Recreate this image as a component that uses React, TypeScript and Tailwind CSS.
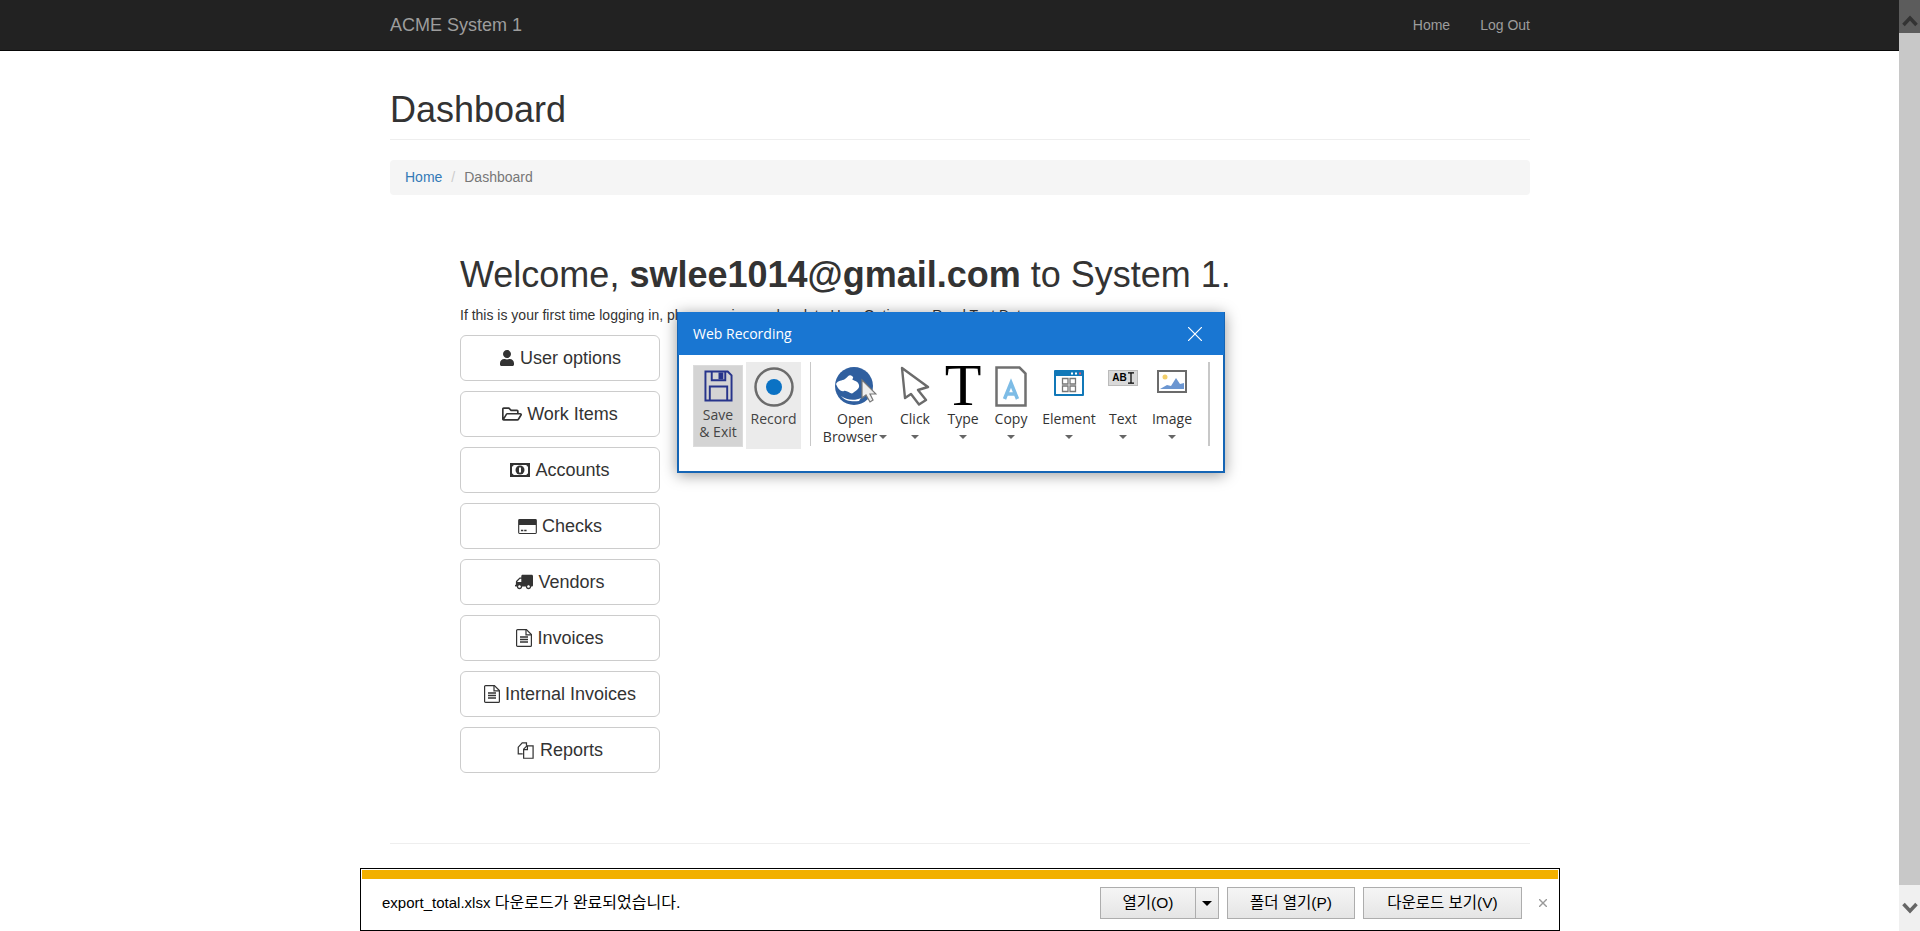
import { ReactNode } from 'react'
import { FaUser, FaRegFolderOpen, FaTruck } from 'react-icons/fa'

function MoneyIcon() {
  return (
    <svg viewBox="0 0 20 14" className="w-[20px] h-[14px]">
      <path d="M0 0h20v14H0z" fill="#333" />
      <path d="M2 3.500Q3.500 3.500 3.500 2h13q0 1.500 1.500 1.500v7q-1.500 0-1.500 1.500h-13Q3.500 10.500 2 10.500z" fill="#fff" />
      <circle cx="10" cy="7" r="4.500" fill="#333" />
      <path d="M9 4.500h2v5H9z" fill="#fff" />
    </svg>
  )
}

function CardIcon() {
  return (
    <svg viewBox="0 0 20 16" className="w-[19px] h-[15px]" fill="#333">
      <path d="M1.500 0h17A1.500 1.500 0 0 1 20 1.500v13a1.500 1.500 0 0 1-1.500 1.500h-17A1.500 1.500 0 0 1 0 14.500v-13A1.500 1.500 0 0 1 1.500 0zM1.200 6.500v8.300h17.600V6.500zM3 11.500h2.500V13H3zM6.500 11.500H9V13H6.500z" fillRule="evenodd" />
    </svg>
  )
}

function FileIcon() {
  return (
    <svg viewBox="0 0 16 18" className="w-[16px] h-[18px]" fill="none" stroke="#333" strokeWidth="1.200">
      <path d="M1.600.6h8.800l5 5v10.800a1 1 0 0 1-1 1H1.600a1 1 0 0 1-1-1V1.600a1 1 0 0 1 1-1z" />
      <path d="M10 .8v5h5" />
      <path d="M4 8h8M4 10.500h8M4 13h8" strokeWidth="1.400" />
    </svg>
  )
}

function DuplicateIcon() {
  return (
    <svg viewBox="0 0 18 18" className="w-[18px] h-[17px]" fill="none" stroke="#333" strokeWidth="1.300">
      <path d="M5.500 12.500H.8V5.500L5 1h4.500v3" />
      <path d="M6.500 7.500 10 4h6.500v13.200H6.500z" fill="#fff" />
      <path d="M6.500 8H10.500V4" />
    </svg>
  )
}

const menuItems: { label: string; icon: ReactNode }[] = [
  { label: 'User options', icon: <FaUser className="w-[16px] h-[16px]" /> },
  { label: 'Work Items', icon: <FaRegFolderOpen className="w-[20px] h-[18px]" /> },
  { label: 'Accounts', icon: <MoneyIcon /> },
  { label: 'Checks', icon: <CardIcon /> },
  { label: 'Vendors', icon: <FaTruck className="w-[18px] h-[16px] -scale-x-100" /> },
  { label: 'Invoices', icon: <FileIcon /> },
  { label: 'Internal Invoices', icon: <FileIcon /> },
  { label: 'Reports', icon: <DuplicateIcon /> },
]

function Caret() {
  return <span className="block w-0 h-0 border-x-[4px] border-x-transparent border-t-[4px] border-t-[#666]" />
}

function ToolItem({ icon, label, width, second }: { icon: ReactNode; label: string; width: string; second?: string }) {
  return (
    <div className={`flex flex-col items-center ${width}`}>
      <div className="h-[47px] flex items-start justify-center">{icon}</div>
      <span className="text-[14px] leading-[18px] text-[#333] mt-[1px]">{label}</span>
      {second ? (
        <span className="flex items-center gap-[2px] text-[14px] leading-[18px] text-[#333]">
          {second}
          <Caret />
        </span>
      ) : (
        <span className="h-[18px] flex items-center"><Caret /></span>
      )}
    </div>
  )
}

function RecorderWindow() {
  return (
    <div className="absolute left-[677px] top-[312px] w-[548px] h-[161px] bg-white border-x-2 border-b-2 border-[#1565b5] shadow-[0_2px_14px_rgba(0,0,0,0.4)] font-['Open_Sans',sans-serif]">
      <div className="h-[43px] -mx-[1px] bg-[#1976d2] flex items-center justify-between pl-[15px] pr-[22px] text-white text-[14px]">
        <span>Web Recording</span>
        <svg viewBox="0 0 14 14" className="w-[14px] h-[14px]" stroke="#fff" strokeWidth="1.200"><path d="M0 0l14 14M14 0L0 14" /></svg>
      </div>
      <div className="flex items-start pl-[14px] pt-[7px]">
        <div className="w-[50px] h-[82px] mt-[3px] bg-[#d4d4d4] border border-[#dcdcdc] flex flex-col items-center text-[14px] leading-[17px] text-[#444]">
          <svg viewBox="0 0 30 33" className="w-[29px] h-[32px] mt-[4px] mb-[4px]" fill="none" stroke="#27348b" strokeWidth="2">
            <path d="M1.500 1.500h23l4 4v26h-27z" />
            <path d="M8 1.500v9h14v-9" />
            <path d="M16 3.500h3v5h-3z" fill="#27348b" />
            <path d="M6 31V17h18v14" />
          </svg>
          <span>Save</span>
          <span>&amp; Exit</span>
        </div>
        <div className="w-[55px] h-[87px] ml-[3px] bg-[#ebebeb] flex flex-col items-center text-[14px] text-[#444]">
          <svg viewBox="0 0 40 40" className="w-[40px] h-[40px] mt-[5px] mb-[3px]">
            <circle cx="20" cy="20" r="18.500" fill="none" stroke="#6b6b6b" strokeWidth="2.500" />
            <circle cx="20" cy="20" r="8" fill="#0b72c4" />
          </svg>
          <span className="leading-[18px]">Record</span>
        </div>
        <span className="block w-[1px] h-[84px] bg-[#c8c8c8] ml-[9px]" />
        <div className="flex ml-[6px]">
          <ToolItem
            width="w-[76px]"
            label="Open"
            second="Browser"
            icon={
              <svg viewBox="0 0 44 40" className="w-[44px] h-[40px] mt-[5px]">
                <circle cx="21" cy="19" r="19" fill="#2f5f9f" />
                <path d="M3 17C5 13 9 14 12 12S16 7 19 9 18 12 20 13 25 14 26 18 22 24 20 26 14 23 11 24 5 22 3 17z" fill="#fff" />
                <path d="M8 29c5 4 14 5 20 2l-2 3c-7 1-14 0-18-5z" fill="#fff" />
                <path d="M29 13v18l4-3 4 7 3-2-3-6h6z" fill="#eee" stroke="#777" strokeWidth="1.200" />
              </svg>
            }
          />
          <ToolItem
            width="w-[44px]"
            label="Click"
            icon={
              <svg viewBox="0 0 30 40" className="w-[30px] h-[40px] mt-[4px]" fill="#fff" stroke="#6b6b6b" strokeWidth="2.400">
                <path d="M2 2 28 21 18 24 26 34 19 38.500 11 28 5 32z" strokeLinejoin="round" />
              </svg>
            }
          />
          <ToolItem
            width="w-[52px]"
            label="Type"
            icon={<span className="block font-['Liberation_Serif',serif] text-[60px] leading-[47px] text-black">T</span>}
          />
          <ToolItem
            width="w-[44px]"
            label="Copy"
            icon={
              <svg viewBox="0 0 32 41" className="w-[32px] h-[41px] mt-[4px]">
                <path d="M1.500 1.500h23l6 6v32h-29z" fill="#fff" stroke="#707070" strokeWidth="2.500" />
                <path d="M9.500 33l6.500-16 6.500 16M11.500 28h9" fill="none" stroke="#7dbce6" strokeWidth="3.500" />
              </svg>
            }
          />
          <ToolItem
            width="w-[72px]"
            label="Element"
            icon={
              <svg viewBox="0 0 30 26" className="w-[30px] h-[26px] mt-[8px]">
                <rect width="30" height="26" rx="1" fill="#1178b8" />
                <rect x="2" y="6" width="26" height="18" fill="#fff" />
                <rect x="17" y="2.500" width="2" height="2" fill="#fff" />
                <rect x="21" y="2.500" width="2" height="2" fill="#fff" />
                <rect x="25" y="2.500" width="2" height="2" fill="#e9546b" />
                <path d="M8.500 8.500h5.500v5.500H8.500zM16 8.500h5.500v5.500H16zM8.500 16h5.500v5.500H8.500zM16 16h5.500v5.500H16z" fill="#fff" stroke="#777" strokeWidth="1.300" />
              </svg>
            }
          />
          <ToolItem
            width="w-[36px]"
            label="Text"
            icon={
              <span className="mt-[8px] w-[30px] h-[16px] bg-[#d9d9d9] border border-[#bbb] flex items-center justify-center gap-[1px] font-['Liberation_Sans',sans-serif] font-bold text-[10px] leading-none text-black">
                AB
                <svg viewBox="0 0 6 12" className="w-[6px] h-[12px]" fill="none" stroke="#000" strokeWidth="1.200">
                  <path d="M0 .8h6M0 11.200h6M3 .8v10.400" />
                </svg>
              </span>
            }
          />
          <ToolItem
            width="w-[62px]"
            label="Image"
            icon={
              <svg viewBox="0 0 30 23" className="w-[30px] h-[23px] mt-[8px]">
                <rect x="1" y="1" width="28" height="21" fill="#fff" stroke="#6b6b6b" strokeWidth="2" />
                <circle cx="8" cy="7" r="2.500" fill="#f2cf6b" />
                <path d="M3 19l7-4 4 1 5-8 4 6 4-1v6z" fill="#6b96d1" />
              </svg>
            }
          />
        </div>
        <span className="block w-[2px] h-[84px] bg-[#c8c8c8] ml-[5px]" />
      </div>
    </div>
  )
}

function DownloadBar() {
  return (
    <div className="absolute left-[360px] top-[868px] w-[1200px] h-[63px] bg-white border border-black font-['Liberation_Sans','Noto_Sans_CJK_KR',sans-serif]">
      <div className="h-[9px] mx-[1px] mt-[1px] bg-[#f2b000]" />
      <div className="flex items-center justify-between h-[48px] pl-[21px] pr-[12px] text-[15.500px] text-black">
        <span className="text-[16px]">
          <span className="text-[15px]">export_total.xlsx</span> 다운로드가 완료되었습니다.
        </span>
        <div className="flex items-center">
          <div className="flex h-[32px] border border-[#adadad] bg-gradient-to-b from-[#f5f5f5] to-[#e5e5e5]">
            <span className="w-[95px] flex items-center justify-center border-r border-[#adadad]">열기(O)</span>
            <span className="w-[22px] flex items-center justify-center">
              <span className="block w-0 h-0 border-x-[5px] border-x-transparent border-t-[5px] border-t-black" />
            </span>
          </div>
          <span className="ml-[8px] w-[128px] h-[32px] flex items-center justify-center border border-[#adadad] bg-gradient-to-b from-[#f5f5f5] to-[#e5e5e5]">폴더 열기(P)</span>
          <span className="ml-[8px] w-[159px] h-[32px] flex items-center justify-center border border-[#adadad] bg-gradient-to-b from-[#f5f5f5] to-[#e5e5e5]">다운로드 보기(V)</span>
          <svg viewBox="0 0 8 8" className="ml-[17px] w-[8px] h-[8px]" stroke="#999" strokeWidth="1.400"><path d="M0 0l8 8M8 0L0 8" /></svg>
        </div>
      </div>
    </div>
  )
}

export default function App() {
  return (
    <div className="relative flex h-[931px] overflow-hidden bg-white font-['Liberation_Sans',sans-serif] text-[#333]">
      <div className="flex-1 min-w-0">
        <nav className="h-[51px] bg-[#222] border-b border-[#080808]">
          <div className="w-[1140px] ml-[390px] h-[50px] flex items-center justify-between text-[#9d9d9d]">
            <span className="text-[18px]">ACME System 1</span>
            <div className="flex gap-[30px] text-[14px]">
              <span>Home</span>
              <span>Log Out</span>
            </div>
          </div>
        </nav>
        <div className="w-[1140px] ml-[390px]">
          <div className="mt-[39px] pb-[9px] border-b border-[#eee]">
            <h1 className="text-[36px] leading-[40px]">Dashboard</h1>
          </div>
          <div className="mt-[20px] h-[35px] px-[15px] flex items-center bg-[#f5f5f5] rounded text-[14px]">
            <span className="text-[#337ab7]">Home</span>
            <span className="text-[#ccc] px-[9px]">/</span>
            <span className="text-[#777]">Dashboard</span>
          </div>
          <div className="ml-[70px] mt-[60px]">
            <h2 className="text-[36px] leading-[40px]">
              Welcome, <b>swlee1014@gmail.com</b> to System 1.
            </h2>
            <p className="mt-[10px] text-[14px] leading-[20px]">
              If this is your first time logging in, please review and update User Options or Read Test Data.
            </p>
            <div className="mt-[10px] flex flex-col gap-[10px] w-[200px]">
              {menuItems.map((item) => (
                <div key={item.label} className="h-[46px] flex items-center justify-center gap-[5px] border border-[#ccc] rounded-md text-[18px]">
                  {item.icon}
                  <span>{item.label}</span>
                </div>
              ))}
            </div>
          </div>
          <div className="mt-[70px] border-t border-[#eee]" />
        </div>
      </div>
      <div className="w-[21px] flex flex-col bg-[#c8c8c8]">
        <div className="h-[33px] bg-[#5c5c5c] flex items-center justify-center pt-[9px]">
          <svg viewBox="0 0 16 12" className="w-[16px] h-[12px]" fill="none" stroke="#333" strokeWidth="3.500"><path d="M1.500 10 8 3l6.500 7" /></svg>
        </div>
        <div className="h-[852px] mx-[1px] bg-[#c8c8c8]" />
        <div className="flex-1 bg-[#f0f0f0] flex items-center justify-center">
          <svg viewBox="0 0 16 12" className="w-[16px] h-[12px]" fill="none" stroke="#666" strokeWidth="3.500"><path d="M1.500 2 8 9l6.500-7" /></svg>
        </div>
      </div>
      <RecorderWindow />
      <DownloadBar />
    </div>
  )
}
